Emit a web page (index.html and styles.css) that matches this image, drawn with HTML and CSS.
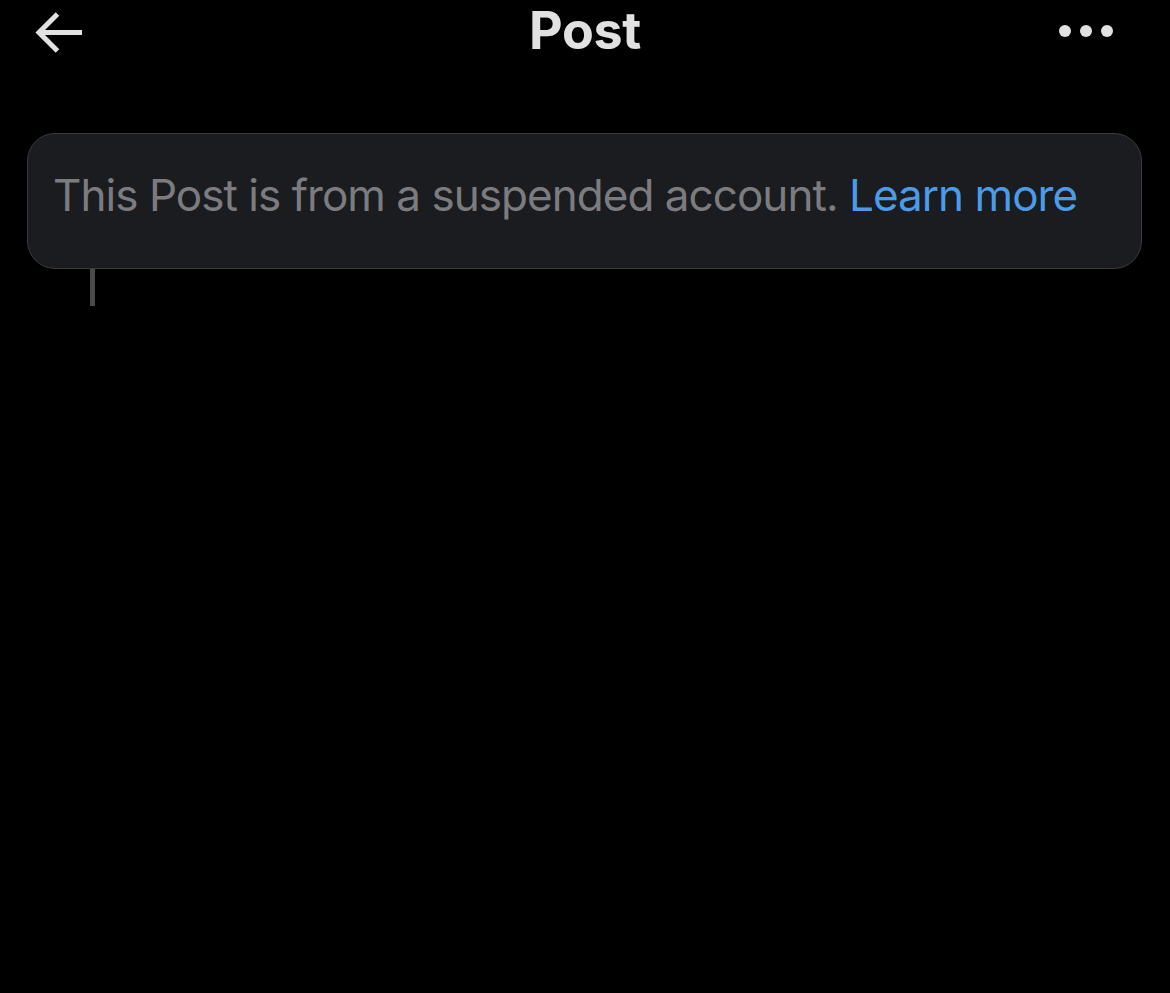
FILE: index.html
```html
<!DOCTYPE html>
<html lang="en">
<head>
<meta charset="utf-8">
<title>Post</title>
<link rel="stylesheet" href="styles.css">
</head>
<body>
<div class="page">
  <header class="topbar">
    <div class="back">
      <svg width="54" height="48" viewBox="0 0 54 48" aria-hidden="true">
        <path d="M49 22.5 H6 M24.5 4 L6 22.5 L24.5 41" fill="none" stroke="#e2e2e2" stroke-width="5"/>
      </svg>
    </div>
    <h1 class="title">Post</h1>
    <div class="more">
      <span class="dot"></span><span class="dot"></span><span class="dot"></span>
    </div>
  </header>
  <section class="notice">
    <p class="notice-text">This Post is from a suspended account. <a class="link" href="#">Learn more</a></p>
  </section>
  <div class="thread-line"></div>
</div>
</body>
</html>
```
FILE: styles.css
```css
html, body {
  margin: 0;
  padding: 0;
  background: #000;
}
.page {
  width: 1170px;
  height: 993px;
  background: #000;
  font-family: Inter, "Noto Sans", sans-serif;
}
.topbar {
  display: grid;
  grid-template-columns: 1fr auto 1fr;
  align-items: center;
  height: 61px;
  padding: 0 33px;
}
.back {
  display: flex;
  align-items: center;
  padding-top: 7px;
}
.back svg {
  display: block;
}
.title {
  margin: 0;
  font-size: 52px;
  font-weight: 700;
  color: #e1e1e1;
  letter-spacing: -0.3px;
  line-height: 61px;
}
.more {
  display: flex;
  justify-content: flex-end;
  gap: 9px;
  padding-top: 1px;
  padding-right: 24px;
}
.dot {
  width: 12px;
  height: 12px;
  border-radius: 50%;
  background: #e1e1e1;
}
.notice {
  margin: 72px 28px 0 27px;
  height: 136px;
  box-sizing: border-box;
  border: 1px solid #3b3b3e;
  border-radius: 28px;
  background: #1b1c1f;
  display: flex;
  align-items: center;
  padding: 0 26px 12px 25px;
}
.notice-text {
  margin: 0;
  font-size: 44px;
  color: #7c7c80;
  letter-spacing: -0.96px;
  white-space: nowrap;
}
.link {
  color: #4a9cea;
  text-decoration: none;
}
.thread-line {
  margin-left: 90px;
  width: 5px;
  height: 37px;
  background: #4a4a4c;
}
```
